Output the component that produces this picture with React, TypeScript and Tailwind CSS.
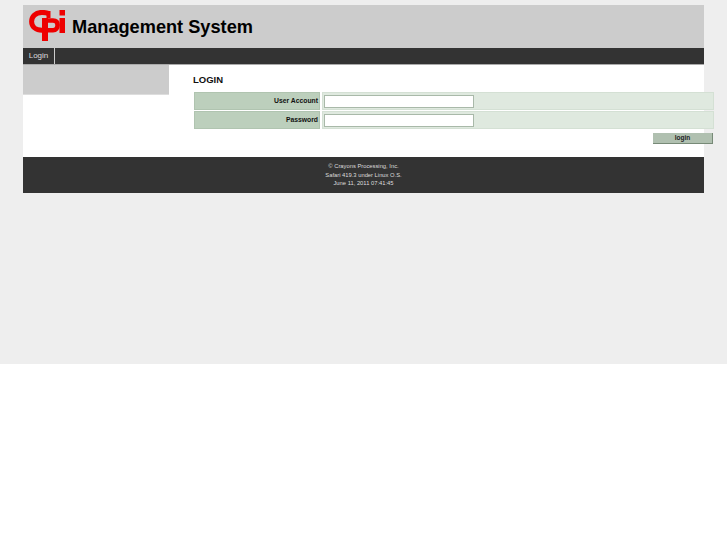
import React from 'react';

const Logo = () => (
  <svg width="36" height="31" viewBox="0 0 36 31" className="mb-[2px] block shrink-0">
    {/* C */}
    <path d="M20 3.6 C17.5 2.6 15.5 2.4 13 2.4 C6.5 2.4 2.6 6.4 2.6 11.5 C2.6 17 7 20.2 13 20.2" fill="none" stroke="#ee0000" strokeWidth="5" />
    <rect x="17.5" y="1" width="4" height="7" fill="#ee0000" />
    {/* p */}
    <path d="M16 10.5 H24 C27 10.5 28.6 12.2 28.6 15 C28.6 18 27 20.2 24 20.2 H16" fill="none" stroke="#ee0000" strokeWidth="4.6" />
    <rect x="13" y="8" width="6" height="23" fill="#ee0000" />
    {/* i */}
    <rect x="30.5" y="8" width="5.5" height="15" fill="#ee0000" />
    <rect x="30.5" y="0" width="5.5" height="5.5" fill="#ee0000" />
  </svg>
);

const FormRow = ({ label, type }: { label: string; type: string }) => (
  <div className="flex h-[18px] gap-[2px]">
    <div className="flex w-[126px] items-center justify-end border border-[#b0c4b0] bg-[#bccfbc] pr-[1px] text-[6.8px] font-bold text-[#111]">
      {label}
    </div>
    <div className="flex flex-1 items-center border border-[#d4e0d4] bg-[#dfe9df] pl-[1px]">
      <input type={type} className="h-[13px] w-[150px] border border-[#a9b9a9] bg-white" />
    </div>
  </div>
);

export default function App() {
  return (
    <div className="overflow-hidden font-['Liberation_Sans',Arial,sans-serif]">
      <div className="h-[364px] bg-[#eeeeee] pl-[23px] pr-[23px] pt-[5px]">
        <div className="w-[681px]">
          <div className="flex h-[43px] items-center bg-[#cccccc] pl-[6px]">
            <Logo />
            <span className="ml-[7px] mt-[1px] text-[18.2px] font-bold leading-none text-[#000]">Management System</span>
          </div>
          <div className="flex h-[17px] border-b border-[#aaa] bg-[#333333]">
            <div className="flex w-[32px] items-center justify-center border-r border-[#ccc] text-[8px] text-[#ddd]">Login</div>
          </div>
          <div className="flex h-[92px] bg-white">
            <div className="h-[30px] w-[146px] shrink-0 border-b border-[#ddd] bg-[#cccccc]" />
            <div className="ml-[24px] w-[521px] shrink-0 pt-[9px]">
              <div className="text-[9.5px] font-bold leading-[11px] text-[#111]">LOGIN</div>
              <div className="ml-[1px] mt-[7px] flex w-[520px] flex-col gap-px">
                <FormRow label="User Account" type="text" />
                <FormRow label="Password" type="password" />
              </div>
              <div className="mt-[4px] flex justify-end pr-[1px]">
                <button className="h-[11px] w-[60px] border-b border-r border-[#778a77] bg-[#b0c0b0] text-[6.5px] font-bold leading-none text-[#222]">login</button>
              </div>
            </div>
          </div>
          <div className="flex h-[36px] flex-col items-center justify-center bg-[#333333] text-[5.8px] leading-[8.5px] text-[#ddd]">
            <div>© Crayons Processing, Inc.</div>
            <div>Safari 419.3 under Linux O.S.</div>
            <div>June 11, 2011 07:41:45</div>
          </div>
        </div>
      </div>
      <div className="h-[181px] bg-white" />
    </div>
  );
}
